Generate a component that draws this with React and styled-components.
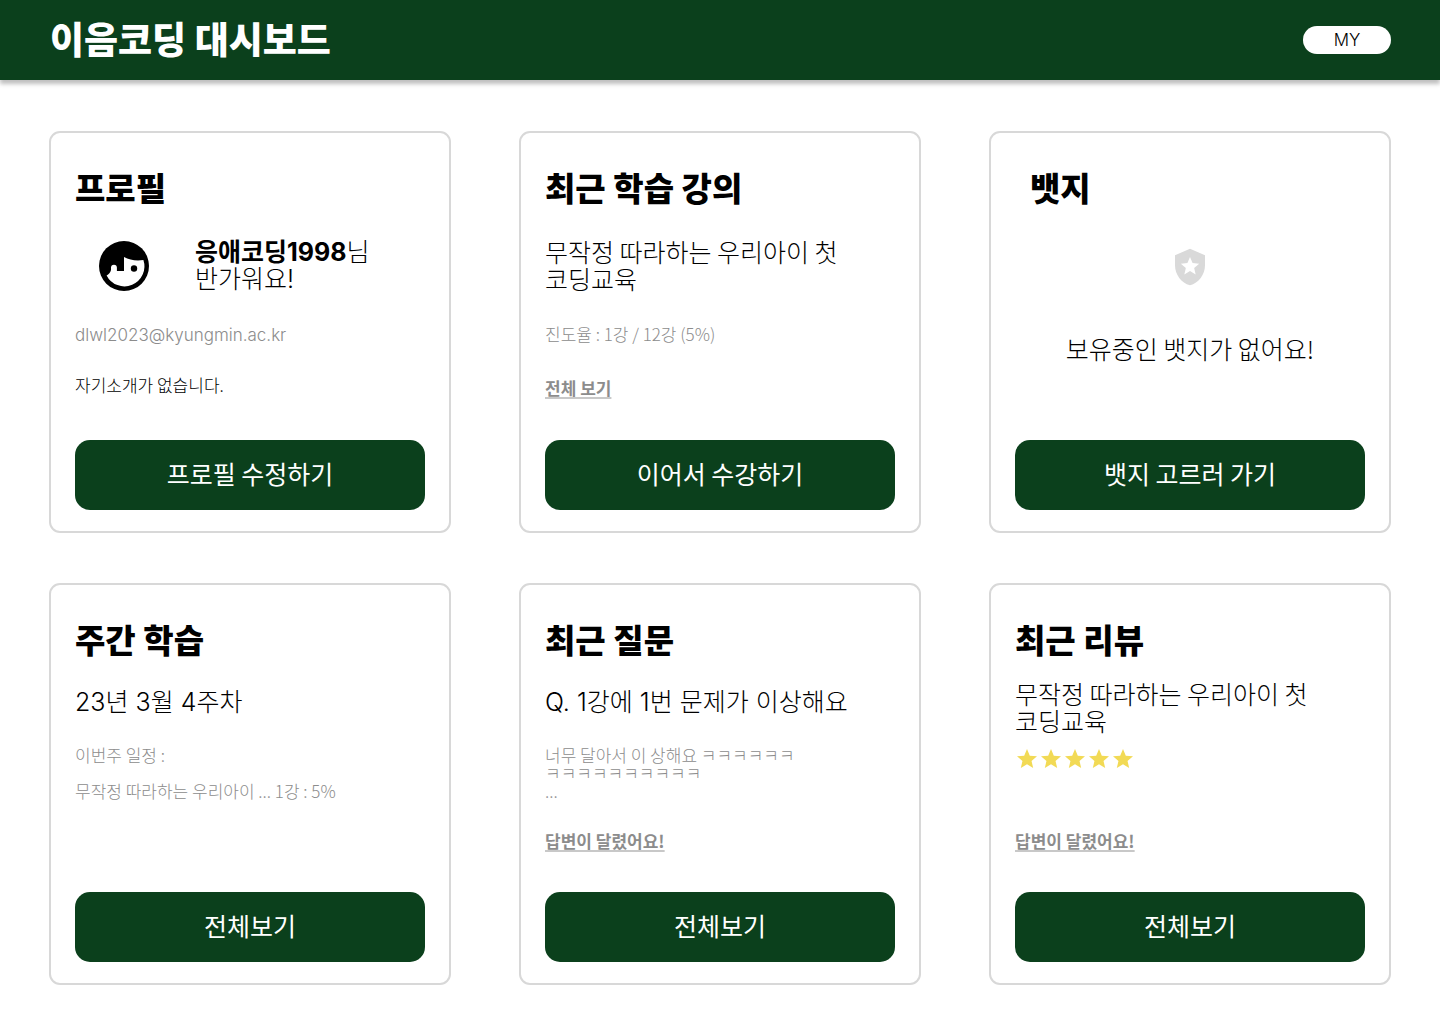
import React from "react";
import styled, { createGlobalStyle } from "styled-components";
import { MdLocalPolice, MdStar } from "react-icons/md";

const color = {
  green: "#0b401c",
  border: "#d8d8d8",
  muted: "#8c8c8c",
  underline: "#c8c8c8",
  badge: "#d9d9d9",
  star: "#f2da55",
};

const korean = '"Noto Sans CJK KR", "Noto Sans", sans-serif';
const mixed = 'Inter, "Noto Sans CJK KR", sans-serif';

const GlobalStyle = createGlobalStyle`
  * {
    box-sizing: border-box;
  }

  body {
    margin: 0;
    background: #fff;
    color: #000;
    font-family: ${korean};
    font-weight: 300;
  }

  h1, h2, p {
    margin: 0;
  }
`;

const Header = styled.header`
  display: flex;
  align-items: center;
  justify-content: space-between;
  height: 80px;
  padding: 0 49px 0 50px;
  background: ${color.green};
  box-shadow: 0 4px 4px rgba(0, 0, 0, 0.25);
`;

const Brand = styled.h1`
  padding-bottom: 4px;
  color: #fff;
  font-size: 37px;
  font-weight: 900;
  line-height: 44px;
`;

const MyButton = styled.button`
  width: 88px;
  height: 28px;
  padding: 0;
  border: 0;
  border-radius: 14px;
  background: #fff;
  color: #000;
  font-family: ${mixed};
  font-size: 17px;
  font-weight: 300;
  line-height: 28px;
  cursor: pointer;
`;

const Board = styled.main`
  display: grid;
  grid-template-columns: repeat(3, minmax(0, 1fr));
  gap: 50px 68px;
  padding: 51px 49px 39px;
`;

const CardFrame = styled.section`
  display: flex;
  flex-direction: column;
  min-height: 402px;
  padding: 34px 24px 21px;
  border: 2px solid ${color.border};
  border-radius: 11px;
`;

const Title = styled.h2`
  padding-left: ${(p) => (p.$indent ? 15 : 0)}px;
  font-size: 33px;
  font-weight: 900;
  line-height: 40px;
`;

const Lead = styled.p`
  margin-top: ${(p) => p.$top || 0}px;
  font-family: ${(p) => (p.$mixed ? mixed : korean)};
  font-size: 25px;
  line-height: 27px;
`;

const Note = styled.p`
  margin-top: ${(p) => p.$top}px;
  color: ${(p) => (p.$dark ? "#000" : color.muted)};
  font-family: ${(p) => (p.$mixed ? mixed : korean)};
  font-size: 17px;
  line-height: 18px;
`;

const MoreLink = styled.a`
  align-self: flex-start;
  margin-top: ${(p) => p.$top}px;
  color: ${color.muted};
  font-size: 17px;
  font-weight: 700;
  line-height: 18px;
  text-decoration: underline;
  text-decoration-color: ${color.underline};
  text-decoration-thickness: 2px;
  text-underline-offset: 2px;
`;

const Action = styled.button`
  height: 70px;
  margin-top: auto;
  padding: 0 0 4px;
  border: 0;
  border-radius: 15px;
  background: ${color.green};
  color: #fff;
  font-family: ${korean};
  font-size: 25px;
  font-weight: 400;
  line-height: 30px;
  cursor: pointer;
`;

const Greeting = styled.div`
  display: flex;
  align-items: center;
  gap: 41px;
  margin-top: 29px;
  padding-left: 19px;
`;

const Name = styled.strong`
  font-weight: 700;
`;

const Empty = styled.div`
  display: flex;
  flex-direction: column;
  align-items: center;
`;

const BadgeIcon = styled(MdLocalPolice)`
  width: 40px;
  height: 40px;
  margin: 40px 0 48px;
  color: ${color.badge};
`;

const Stars = styled.div`
  display: flex;
  margin-top: 13px;
  color: ${color.star};
`;

function Face() {
  return (
    <svg width="60" height="60" viewBox="0 0 60 60" aria-hidden="true">
      <circle cx="30" cy="30" r="25" />
      <path
        fill="#fff"
        d="M12.6 39.4C14.8 38.2 16.4 36.4 17 34V31.6a2.8 2.8 0 0 1 5.9 0V35H30V21C35.5 24 42 25 49.4 24A20 20 0 0 1 12.6 39.4Z"
      />
      <circle cx="40" cy="32.5" r="3.2" />
    </svg>
  );
}

function Card({ title, indent, action, children }) {
  return (
    <CardFrame>
      <Title $indent={indent}>{title}</Title>
      {children}
      <Action type="button">{action}</Action>
    </CardFrame>
  );
}

export default function App() {
  return (
    <>
      <GlobalStyle />
      <Header>
        <Brand>이음코딩 대시보드</Brand>
        <MyButton type="button">MY</MyButton>
      </Header>
      <Board>
        <Card title="프로필" action="프로필 수정하기">
          <Greeting>
            <Face />
            <Lead $mixed>
              <Name>응애코딩1998</Name>님
              <br />
              반가워요!
            </Lead>
          </Greeting>
          <Note $top={30} $mixed>dlwl2023@kyungmin.ac.kr</Note>
          <Note $top={32} $dark>자기소개가 없습니다.</Note>
        </Card>

        <Card title="최근 학습 강의" action="이어서 수강하기">
          <Lead $top={31}>
            무작정 따라하는 우리아이 첫
            <br />
            코딩교육
          </Lead>
          <Note $top={33}>진도율 : 1강 / 12강 (5%)</Note>
          <MoreLink href="#lectures" $top={36}>전체 보기</MoreLink>
        </Card>

        <Card title="뱃지" indent action="뱃지 고르러 가기">
          <Empty>
            <BadgeIcon aria-hidden="true" />
            <Lead>보유중인 뱃지가 없어요!</Lead>
          </Empty>
        </Card>

        <Card title="주간 학습" action="전체보기">
          <Lead $top={30} $mixed>23년 3월 4주차</Lead>
          <Note $top={30}>이번주 일정 :</Note>
          <Note $top={18}>무작정 따라하는 우리아이 ... 1강 : 5%</Note>
        </Card>

        <Card title="최근 질문" action="전체보기">
          <Lead $top={30} $mixed>Q. 1강에 1번 문제가 이상해요</Lead>
          <Note $top={30}>
            너무 달아서 이 상해요 ㅋㅋㅋㅋㅋㅋ
            <br />
            ㅋㅋㅋㅋㅋㅋㅋㅋㅋㅋ
            <br />
            ...
          </Note>
          <MoreLink href="#questions" $top={32}>답변이 달렸어요!</MoreLink>
        </Card>

        <Card title="최근 리뷰" action="전체보기">
          <Lead $top={21}>
            무작정 따라하는 우리아이 첫
            <br />
            코딩교육
          </Lead>
          <Stars role="img" aria-label="별점 5점">
            {[1, 2, 3, 4, 5].map((n) => (
              <MdStar key={n} size={24} />
            ))}
          </Stars>
          <MoreLink href="#reviews" $top={61}>답변이 달렸어요!</MoreLink>
        </Card>
      </Board>
    </>
  );
}
